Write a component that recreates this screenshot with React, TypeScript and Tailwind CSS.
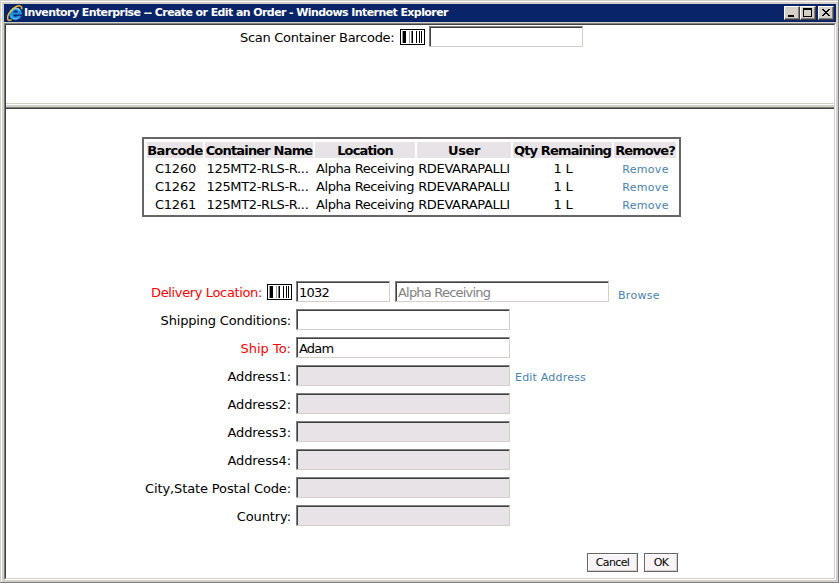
import type { ReactNode } from "react";

const inset = "border border-t-[#808080] border-l-[#808080] border-r-[#d4d0c8] border-b-[#d4d0c8]";

function Field({ width, value = "", tone = "bg-white text-black" }: { width: string; value?: string; tone?: string }) {
  return (
    <div className={`h-[21px] shrink-0 ${inset} ${width}`}>
      <div className={`h-full w-full border-t border-l border-[#404040] pl-px text-[13px] leading-[19px] tracking-[-0.8px] whitespace-nowrap ${tone}`}>
        {value}
      </div>
    </div>
  );
}

function Barcode() {
  return (
    <svg width="25" height="16" viewBox="0 0 25 16" shapeRendering="crispEdges" className="shrink-0">
      <rect width="25" height="16" fill="#000" />
      <rect x="1" y="1" width="23" height="14" fill="#fff" />
      <path d="M3 2h1v12H3zM4 2h2v12H4zM12 2h1v12h-1zM16 2h1v12h-1zM19 2h1v12h-1zM21 2h1v12h-1z" fill="#000" />
      <path d="M2 2h1v12H2zM9 2h1v12H9z" fill="#999" />
      <path d="M11 2h1v12h-1z" fill="#777" />
    </svg>
  );
}

function ExplorerLogo() {
  return (
    <svg width="16" height="16" viewBox="0 0 16 16" className="shrink-0">
      <path d="M14.9 9.6H6.2c.2 2.6 3.6 2.8 4.5 1.1h3.9C12.8 16.6 2.2 16 2.2 8.9 2.2 1 15.4 .9 14.9 9.6Z" fill="#2193e0" />
      <path d="M4 6.2c1.6-3.6 7.2-3.8 8.9-.6" fill="none" stroke="#7fd4ff" strokeWidth="1.5" />
      <path d="M3.6 10.5c.7 3 4.6 4.3 7.6 2.6" fill="none" stroke="#5cbcf6" strokeWidth="1.1" />
      <path d="M6.3 7.4h4.6C10.6 5 6.6 5 6.3 7.4Z" fill="#0a246a" />
      <path d="M14.6 4.2C15.6.2 11.4-.2 7.2 2.8 2.6 6.1-.2 11.2.8 14.2c.4 1.4 2.2 1.3 3.8.5" fill="none" stroke="#f6bc2c" strokeWidth="1.5" />
    </svg>
  );
}

function CaptionButton({ children }: { children: ReactNode }) {
  return (
    <div className="h-[14px] w-4 border border-t-white border-l-white border-r-[#404040] border-b-[#404040]">
      <div className="h-full w-full border-r border-b border-[#808080] bg-[#d4d0c8]">
        <svg width="13" height="11" viewBox="0 0 13 11" shapeRendering="crispEdges" className="block">
          {children}
        </svg>
      </div>
    </div>
  );
}

const columns = [
  { label: "Barcode", width: "w-[56px]", head: "tracking-[-0.65px]" },
  { label: "Container Name", width: "w-[108px]", head: "tracking-[-0.82px]" },
  { label: "Location", width: "w-[100px]", head: "tracking-[-0.85px]" },
  { label: "User", width: "w-[94px]", head: "tracking-[-0.4px]" },
  { label: "Qty Remaining", width: "w-[99px]", head: "tracking-[-0.85px]" },
  { label: "Remove?", width: "w-[62px]", head: "tracking-[-0.95px]" },
];

const containers = ["C1260", "C1262", "C1261"];

function Cell({ width, children }: { width: string; children: ReactNode }) {
  return <div className={`flex shrink-0 justify-center ${width}`}>{children}</div>;
}

function ContainerTable() {
  return (
    <div className="ml-[136px] flex h-20 w-[539px] flex-col gap-[2px] border-2 border-[#666] px-[3px] pt-[3px] text-[13px] leading-4 whitespace-nowrap">
      <div className="flex gap-[2px] font-bold">
        {columns.map((c) => (
          <div key={c.label} className={`flex h-4 shrink-0 justify-center bg-[#e7e3e7] ${c.width} ${c.head}`}>
            <span className="relative top-px">{c.label}</span>
          </div>
        ))}
      </div>
      {containers.map((id) => (
        <div key={id} className="flex h-4 gap-[2px] leading-[18px]">
          <Cell width="w-[56px]"><span className="pl-px tracking-[-0.2px]">{id}</span></Cell>
          <Cell width="w-[108px]"><span className="pr-[3px] tracking-[-0.35px]">125MT2-RLS-R...</span></Cell>
          <Cell width="w-[100px]"><span className="tracking-[-0.4px]">Alpha Receiving</span></Cell>
          <Cell width="w-[94px]"><span className="tracking-[-0.35px]">RDEVARAPALLI</span></Cell>
          <Cell width="w-[99px]"><span className="pl-px tracking-[-0.2px]">1 L</span></Cell>
          <Cell width="w-[62px]"><span className="pl-px text-[11px] leading-[19px] tracking-[0.3px] text-[#4682b4]">Remove</span></Cell>
        </div>
      ))}
    </div>
  );
}

function Row({ label, color = "text-black", tracking = "", children }: { label: string; color?: string; tracking?: string; children: ReactNode }) {
  return (
    <div className="flex h-[21px]">
      <div className={`mr-[5px] w-[285px] text-right text-[13px] leading-[23px] whitespace-nowrap ${color} ${tracking}`}>{label}</div>
      {children}
    </div>
  );
}

const shaded = "bg-[#e7e3e7] text-black";

function PushButton({ label, width }: { label: string; width: string }) {
  return (
    <button className={`h-[19px] border border-[#666] ${width}`}>
      <span className="block h-full w-full border border-t-white border-l-white border-r-[#d4d0c8] border-b-[#d4d0c8] bg-[#f7f3f7] text-[11px] leading-[16px] tracking-[-0.6px]">
        {label}
      </span>
    </button>
  );
}

export default function App() {
  return (
    <div className="h-[583px] w-[839px] overflow-hidden border-r border-b border-[#808080] bg-[#d4d0c8] pt-px pl-px font-['DejaVu_Sans',sans-serif] text-black">
      <div className="h-[581px] w-[837px] border-t border-l border-white pt-[2px] pl-[2px]">
        <div className="flex h-[18px] w-[832px] items-center bg-[#0a246a] pr-[2px] pl-[3px]">
          <ExplorerLogo />
          <span className="pl-px text-[11px] leading-[18px] font-bold tracking-[-0.59px] whitespace-nowrap text-white">
            Inventory Enterprise -- Create or Edit an Order - Windows Internet Explorer
          </span>
          <div className="ml-auto flex">
            <CaptionButton>
              <path d="M3 8h6v2H3z" />
            </CaptionButton>
            <CaptionButton>
              <path fillRule="evenodd" d="M2 1h9v9H2zM3 3v6h7V3z" />
            </CaptionButton>
            <div className="w-[2px]" />
            <CaptionButton>
              <path d="M3 2h2v1H3zM9 2h2v1H9zM4 3h2v1H4zM8 3h2v1H8zM5 4h4v1H5zM6 5h2v1H6zM5 6h4v1H5zM4 7h2v1H4zM8 7h2v1H8zM3 8h2v1H3zM9 8h2v1H9z" />
            </CaptionButton>
          </div>
        </div>

        <div className="mt-px h-[557px] w-[832px] border border-t-[#808080] border-l-[#808080] border-r-white border-b-white">
          <div className="flex h-full flex-col border border-t-[#404040] border-l-[#404040] border-r-[#d4d0c8] border-b-[#d4d0c8] bg-white">
            <div className="flex h-[78px] shrink-0 pt-px pl-[234px]">
              <span className="mr-[5px] w-[155px] text-[13px] leading-[23px] tracking-[-0.29px] whitespace-nowrap">Scan Container Barcode:</span>
              <div className="mr-1 pt-[3px]"><Barcode /></div>
              <Field width="w-[154px]" />
            </div>
            <div className="h-[6px] shrink-0 border-t border-b border-t-[#d4d0c8] border-b-[#404040]">
              <div className="h-1 border-t border-b border-t-white border-b-[#808080] bg-[#d4d0c8]" />
            </div>

            <div className="pt-7">
              <ContainerTable />
              <div className="mt-16 flex flex-col gap-[7px]">
                <div className="flex h-[21px]">
                  <span className="mr-[5px] w-[256px] text-right text-[13px] leading-[23px] tracking-[-0.36px] text-[#f00]">Delivery Location:</span>
                  <div className="mr-1 pt-[3px]"><Barcode /></div>
                  <Field width="w-[94px]" value="1032" />
                  <div className="w-[5px]" />
                  <Field width="w-[214px]" value="Alpha Receiving" tone="bg-white text-[#808080]" />
                  <span className="ml-[9px] text-[11px] leading-[29px] tracking-[0.3px] text-[#4682b4]">Browse</span>
                </div>
                <Row label="Shipping Conditions:" tracking="tracking-[-0.18px]"><Field width="w-[214px]" /></Row>
                <Row label="Ship To:" color="text-[#f00]"><Field width="w-[214px]" value="Adam" /></Row>
                <Row label="Address1:" tracking="tracking-[-0.1px]">
                  <Field width="w-[214px]" tone={shaded} />
                  <span className="ml-[5px] text-[11px] leading-[25px] tracking-[0.2px] text-[#4682b4]">Edit Address</span>
                </Row>
                <Row label="Address2:" tracking="tracking-[-0.1px]"><Field width="w-[214px]" tone={shaded} /></Row>
                <Row label="Address3:" tracking="tracking-[-0.1px]"><Field width="w-[214px]" tone={shaded} /></Row>
                <Row label="Address4:" tracking="tracking-[-0.1px]"><Field width="w-[214px]" tone={shaded} /></Row>
                <Row label="City,State Postal Code:" tracking="tracking-[-0.12px]"><Field width="w-[214px]" tone={shaded} /></Row>
                <Row label="Country:" tracking="tracking-[-0.1px]"><Field width="w-[214px]" tone={shaded} /></Row>
              </div>
              <div className="mt-[27px] ml-[581px] flex gap-[6px]">
                <PushButton label="Cancel" width="w-[51px]" />
                <PushButton label="OK" width="w-[34px]" />
              </div>
            </div>
          </div>
        </div>
      </div>
    </div>
  );
}
